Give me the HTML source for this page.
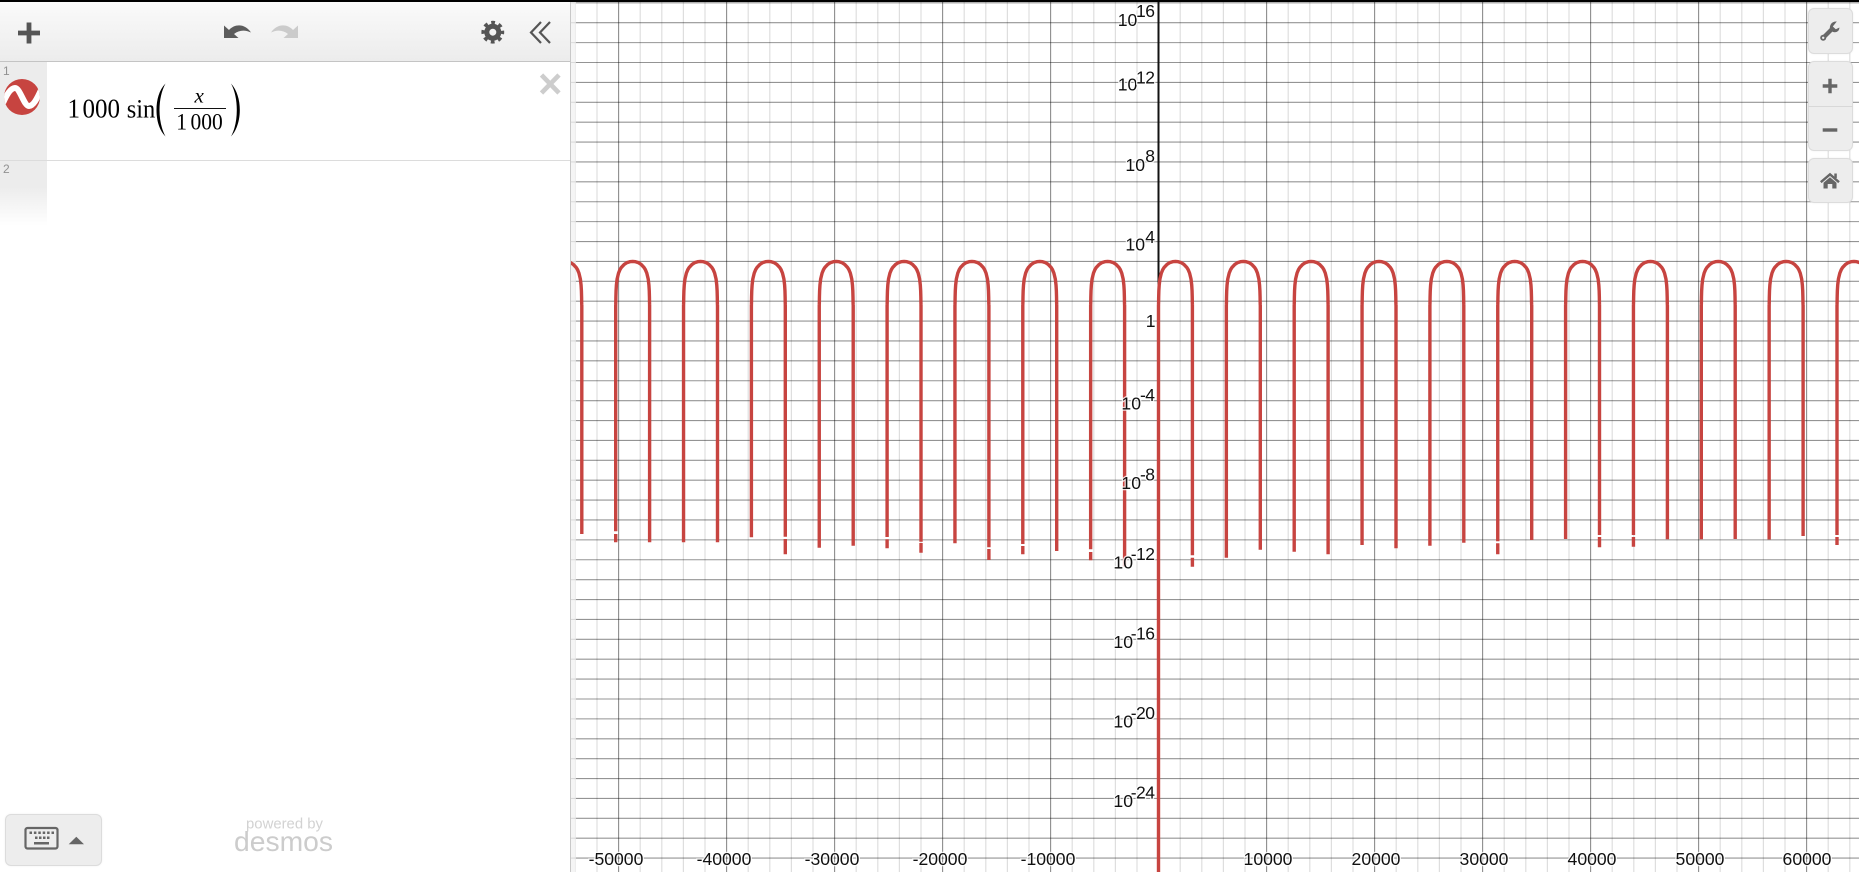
<!DOCTYPE html>
<html lang="en">
<head>
<meta charset="utf-8">
<title>Desmos Graph</title>
<style>
html,body{margin:0;padding:0;background:#fff;}
body{position:relative;width:1859px;height:872px;overflow:hidden;font-family:"Liberation Sans",Arial,sans-serif;}
#graph{position:absolute;left:0;top:0;}
#graph text{font-family:"Liberation Sans",Arial,sans-serif;font-size:17.6px;fill:#111;stroke:#fff;stroke-width:2.6px;paint-order:stroke;stroke-opacity:.8;}
#graph text.s{font-size:17.5px;letter-spacing:-.5px;}
#panel{position:absolute;left:0;top:0;width:570px;height:872px;background:#fff;border-right:1px solid #c8c8c8;}
#head{position:absolute;left:0;top:2px;width:570px;height:59px;background:linear-gradient(#fafafa,#ececec);border-bottom:1px solid #c4c4c4;}
.gut1{position:absolute;left:0;top:62px;width:47px;height:98px;background:#ececec;}
.rowb{position:absolute;left:0;top:160px;width:570px;height:1px;background:#dcdcdc;}
.gut2{position:absolute;left:0;top:161px;width:47px;height:65px;background:linear-gradient(#ececec 0%,#ececec 40%,#fff 100%);}
.num{position:absolute;left:3px;font-size:12px;line-height:12px;color:#919191;}
.btn{position:absolute;background:#ededed;border:1px solid #dcdcdc;border-radius:6px;box-sizing:border-box;box-shadow:0 0 2px rgba(0,0,0,.06);}
#icons{position:absolute;left:0;top:0;}
#icons text{font-family:"Liberation Serif","Times New Roman",serif;fill:#000;}
#icons text.sans{font-family:"Liberation Sans",Arial,sans-serif;}
</style>
</head>
<body>
<svg id="graph" width="1859" height="872" viewBox="0 0 1859 872" xmlns="http://www.w3.org/2000/svg">
<defs>
<path id="a" d="M0 305L.09 302.9L.18 296.9L.35 290.9L.71 285L1.41 279L2.83 273.1L4.24 269.7L5.65 267.4L8.48 264.4L11.31 262.6L14.1 261.7L16.96 261.4L19.82 261.7L22.61 262.6L25.44 264.4L28.27 267.4L29.68 269.7L31.09 273.1L32.51 279L33.21 285L33.57 290.9L33.74 296.9L33.83 302.9L33.92 305" fill="none" stroke="#c74440" stroke-width="3.4" stroke-linejoin="round"/>
</defs>
<rect width="1859" height="872" fill="#fff"/>
<path fill="none" stroke="#000" stroke-opacity=".13" stroke-width="1.2" d="M575.4 0V872M597 0V872M640.2 0V872M661.8 0V872M683.4 0V872M705 0V872M748.2 0V872M769.8 0V872M791.4 0V872M813 0V872M856.2 0V872M877.8 0V872M899.4 0V872M921 0V872M964.2 0V872M985.8 0V872M1007.4 0V872M1029 0V872M1072.2 0V872M1093.8 0V872M1115.4 0V872M1137 0V872M1180.2 0V872M1201.8 0V872M1223.4 0V872M1245 0V872M1288.2 0V872M1309.8 0V872M1331.4 0V872M1353 0V872M1396.2 0V872M1417.8 0V872M1439.4 0V872M1461 0V872M1504.2 0V872M1525.8 0V872M1547.4 0V872M1569 0V872M1612.2 0V872M1633.8 0V872M1655.4 0V872M1677 0V872M1720.2 0V872M1741.8 0V872M1763.4 0V872M1785 0V872M1828.2 0V872M1849.8 0V872"/>
<path fill="none" stroke="#000" stroke-opacity=".42" stroke-width="1.1" d="M571 2.84H1859M571 22.73H1859M571 42.62H1859M571 62.51H1859M571 82.4H1859M571 102.29H1859M571 122.18H1859M571 142.07H1859M571 161.96H1859M571 181.85H1859M571 201.74H1859M571 221.63H1859M571 241.52H1859M571 261.41H1859M571 281.3H1859M571 301.19H1859M571 321.08H1859M571 340.97H1859M571 360.86H1859M571 380.75H1859M571 400.64H1859M571 420.53H1859M571 440.42H1859M571 460.31H1859M571 480.2H1859M571 500.09H1859M571 519.98H1859M571 539.87H1859M571 559.76H1859M571 579.65H1859M571 599.54H1859M571 619.43H1859M571 639.32H1859M571 659.21H1859M571 679.1H1859M571 698.99H1859M571 718.88H1859M571 738.77H1859M571 758.66H1859M571 778.55H1859M571 798.44H1859M571 818.33H1859M571 838.22H1859M571 858.11H1859"/>
<path fill="none" stroke="#000" stroke-opacity=".45" stroke-width="1.1" d="M618.6 0V872M726.6 0V872M834.6 0V872M942.6 0V872M1050.6 0V872M1266.6 0V872M1374.6 0V872M1482.6 0V872M1590.6 0V872M1698.6 0V872M1806.6 0V872"/>
<rect x="571" y="0" width="5" height="872" fill="#f2f2f2" fill-opacity=".75"/>
<rect x="1157.5" y="0" width="2" height="872" fill="#111"/>
<g>
<use href="#a" x="547.85"/><use href="#a" x="615.7"/><use href="#a" x="683.55"/><use href="#a" x="751.4"/><use href="#a" x="819.25"/><use href="#a" x="887.1"/><use href="#a" x="954.95"/><use href="#a" x="1022.8"/><use href="#a" x="1090.65"/><use href="#a" x="1158.5"/><use href="#a" x="1226.35"/><use href="#a" x="1294.2"/><use href="#a" x="1362.05"/><use href="#a" x="1429.9"/><use href="#a" x="1497.75"/><use href="#a" x="1565.6"/><use href="#a" x="1633.45"/><use href="#a" x="1701.3"/><use href="#a" x="1769.15"/><use href="#a" x="1837"/>
</g>
<path fill="none" stroke="#c74440" stroke-width="3.4" d="M581.8 305V534M615.7 305V531.3M615.7 534V542.3M649.6 305V542.3M683.55 305V542.3M717.5 305V542.3M751.4 305V537.3M785.3 305V536.7M785.3 539V554.3M819.25 305V547.7M853.2 305V545.7M887.1 305V537M887.1 539.3V548.3M921 305V541.7M921 543V552.7M954.95 305V543.3M988.9 305V547.3M988.9 549V560M1022.8 305V544M1022.8 546V554.3M1056.7 305V551M1090.65 305V549.3M1090.65 552V560.3M1124.6 305V566.7M1158.5 305V872M1192.4 305V555.3M1192.4 557.7V566.7M1226.35 305V557.7M1260.3 305V549.7M1294.2 305V551.7M1328.1 305V554.3M1362.05 305V545M1396 305V548.3M1429.9 305V545.7M1463.8 305V542.7M1497.75 305V541.3M1497.75 543.3V554.3M1531.7 305V540M1565.6 305V539M1599.5 305V535M1599.5 537V547.3M1633.45 305V535M1633.45 537V546.7M1667.4 305V539.3M1701.3 305V539.3M1735.2 305V539M1769.15 305V539.5M1803.1 305V536M1837 305V535M1837 537V545"/>
<!-- y labels -->
<text x="1137.3" y="26" text-anchor="end">10</text><text class="s" x="1154.5" y="17" text-anchor="end">16</text>
<text x="1137.3" y="90.5" text-anchor="end">10</text><text class="s" x="1154.5" y="83.3" text-anchor="end">12</text>
<text x="1145" y="171" text-anchor="end">10</text><text class="s" x="1154.5" y="162" text-anchor="end">8</text>
<text x="1145" y="250.5" text-anchor="end">10</text><text class="s" x="1154.5" y="243" text-anchor="end">4</text>
<text x="1155.5" y="327" text-anchor="end">1</text>
<text x="1141" y="409.5" text-anchor="end">10</text><text class="s" x="1154.5" y="401" text-anchor="end">-4</text>
<text x="1141" y="489" text-anchor="end">10</text><text class="s" x="1154.5" y="480.5" text-anchor="end">-8</text>
<text x="1133" y="568.5" text-anchor="end">10</text><text class="s" x="1154.5" y="560" text-anchor="end">-12</text>
<text x="1133" y="648" text-anchor="end">10</text><text class="s" x="1154.5" y="639.5" text-anchor="end">-16</text>
<text x="1133" y="727.5" text-anchor="end">10</text><text class="s" x="1154.5" y="719" text-anchor="end">-20</text>
<text x="1133" y="807" text-anchor="end">10</text><text class="s" x="1154.5" y="798.7" text-anchor="end">-24</text>
<!-- x labels -->
<text x="616" y="865" text-anchor="middle">-50000</text>
<text x="724" y="865" text-anchor="middle">-40000</text>
<text x="832" y="865" text-anchor="middle">-30000</text>
<text x="940" y="865" text-anchor="middle">-20000</text>
<text x="1048" y="865" text-anchor="middle">-10000</text>
<text x="1268" y="865" text-anchor="middle">10000</text>
<text x="1376" y="865" text-anchor="middle">20000</text>
<text x="1484" y="865" text-anchor="middle">30000</text>
<text x="1592" y="865" text-anchor="middle">40000</text>
<text x="1700" y="865" text-anchor="middle">50000</text>
<text x="1807" y="865" text-anchor="middle">60000</text>
</svg>

<div class="btn" style="left:1808px;top:8px;width:45px;height:46px;"></div>
<div class="btn" style="left:1808px;top:61px;width:45px;height:90px;"></div>
<div style="position:absolute;left:1808px;top:106px;width:45px;height:1px;background:#d8d8d8;"></div>
<div class="btn" style="left:1808px;top:158px;width:45px;height:45px;"></div>

<div id="panel">
<div id="head"></div>
<div class="gut1"></div>
<div class="rowb"></div>
<div class="gut2"></div>
<div class="num" style="top:65px;">1</div>
<div class="num" style="top:163px;">2</div>
<div class="btn" style="left:5px;top:814px;width:97px;height:52px;"></div>
</div>

<svg id="icons" width="1859" height="872" viewBox="0 0 1859 872" xmlns="http://www.w3.org/2000/svg">
<defs><clipPath id="c"><circle cx="22" cy="97" r="18"/></clipPath></defs>
<rect x="0" y="0" width="1859" height="2" fill="#000"/>
<!-- header -->
<path d="M29 22.5V43.5M18 33H40" stroke="#555" stroke-width="4.8" fill="none"/>
<path d="M224 38V25.5L229 30C235 23.5 245 23.5 251 32.5C245 29.5 239 30 234 34L238.500 38Z" fill="#5c5c5c"/>
<path d="M298 38V25.5L293 30C287 23.5 277 23.5 271 32.5C277 29.5 283 30 288 34L283.500 38Z" fill="#cbcbcb"/>
<circle cx="492.8" cy="32.2" r="9.7" fill="none" stroke="#555" stroke-width="3.4" stroke-dasharray="3.8 3.82" stroke-dashoffset="1.9"/>
<circle cx="492.8" cy="32.2" r="6" fill="none" stroke="#555" stroke-width="5"/>
<path d="M541 22L531 32.500L541 43M550 22L540 32.500L550 43" fill="none" stroke="#555" stroke-width="2.200"/>
<!-- close -->
<path d="M541.500 75L559 93M559 75L541.500 93" stroke="#cdcdcd" stroke-width="4.600" fill="none"/>
<!-- expression icon -->
<circle cx="22" cy="97" r="18" fill="#c74440"/>
<path clip-path="url(#c)" d="M3 103C7 94 11 88 15 88C20 88 24 106 29 106C33 106 37 99 41 90" fill="none" stroke="#fff" stroke-width="6"/>
<!-- math -->
<g transform="translate(0,117.3) scale(1,1.08)">
<text x="67.500" y="0" font-size="25">1</text>
<text x="82.500" y="0" font-size="25">000</text>
<text x="126.700" y="0" font-size="24.500">sin</text>
</g>
<path d="M165.500 83.500C159 90 156.500 100 156.500 110C156.500 120 159 130 165.500 136.500C161.500 129 159.500 120 159.500 110C159.500 100 161.500 91 165.500 83.500Z" fill="#000"/>
<path d="M231 83.500C237 90 239.800 100 239.800 110C239.800 120 237 130 231 136.500C235 129 236.800 120 236.800 110C236.800 100 235 91 231 83.500Z" fill="#000"/>
<text x="194.500" y="102.700" font-size="21" font-style="italic">x</text>
<rect x="174" y="108" width="52" height="1" fill="#111"/>
<g transform="translate(0,129.300) scale(1,1.1)">
<text x="176.300" y="0" font-size="21.500">1</text>
<text x="190.500" y="0" font-size="21.500">000</text>
</g>
<!-- keyboard -->
<rect x="25.500" y="828" width="32" height="20.500" rx="2" fill="none" stroke="#666" stroke-width="2.200"/>
<path d="M29.500 831.500h2.500v2.500h-2.500zM33.900 831.500h2.500v2.500h-2.500zM38.300 831.500h2.500v2.500h-2.500zM42.700 831.500h2.500v2.500h-2.500zM47.100 831.500h2.500v2.500h-2.500zM51.500 831.500h2.500v2.500h-2.500zM35 836.500h2.500v2.500h-2.500zM39 836.500h2.500v2.500h-2.500zM43 836.500h2.500v2.500h-2.500zM47 836.500h2.500v2.500h-2.500zM34 842h15v2.500h-15z" fill="#666"/>
<path d="M68.700 844.300L76.300 836.700L84 844.300Z" fill="#666"/>
<text class="sans" x="246" y="828.500" font-size="15" textLength="77" lengthAdjust="spacingAndGlyphs" style="fill:#d2d2d2">powered by</text>
<text class="sans" x="234" y="851" font-size="28" textLength="99" lengthAdjust="spacingAndGlyphs" style="fill:#cccccc">desmos</text>
<!-- right buttons -->
<path d="M1823.500 37.500L1832 29" stroke="#666" stroke-width="4.200" stroke-linecap="round" fill="none"/>
<path d="M1836.800 21.500C1832.500 21 1829 24.500 1830 29.500L1833 32C1837 33 1839.500 30.500 1839.400 27.500L1835.800 29.200L1832.800 26.500Z" fill="#666"/>
<circle cx="1823.200" cy="37.800" r="3" fill="#666"/><circle cx="1823.200" cy="37.800" r="1.200" fill="#ededed"/>
<path d="M1822.700 86H1837.300M1830 78.700V93.300" stroke="#666" stroke-width="3.400" fill="none"/>
<path d="M1822.700 130H1837.300" stroke="#666" stroke-width="3.400" fill="none"/>
<path d="M1820.800 182.200L1830 174.300L1839 182.200" fill="none" stroke="#666" stroke-width="2.400"/>
<path d="M1823.500 182.800L1830 177.300L1836.500 182.800V188.500H1832.300V184H1827.700V188.500H1823.500Z" fill="#666"/>
<rect x="1834.300" y="173.500" width="2.500" height="4.500" fill="#666"/>
</svg>
</body>
</html>
